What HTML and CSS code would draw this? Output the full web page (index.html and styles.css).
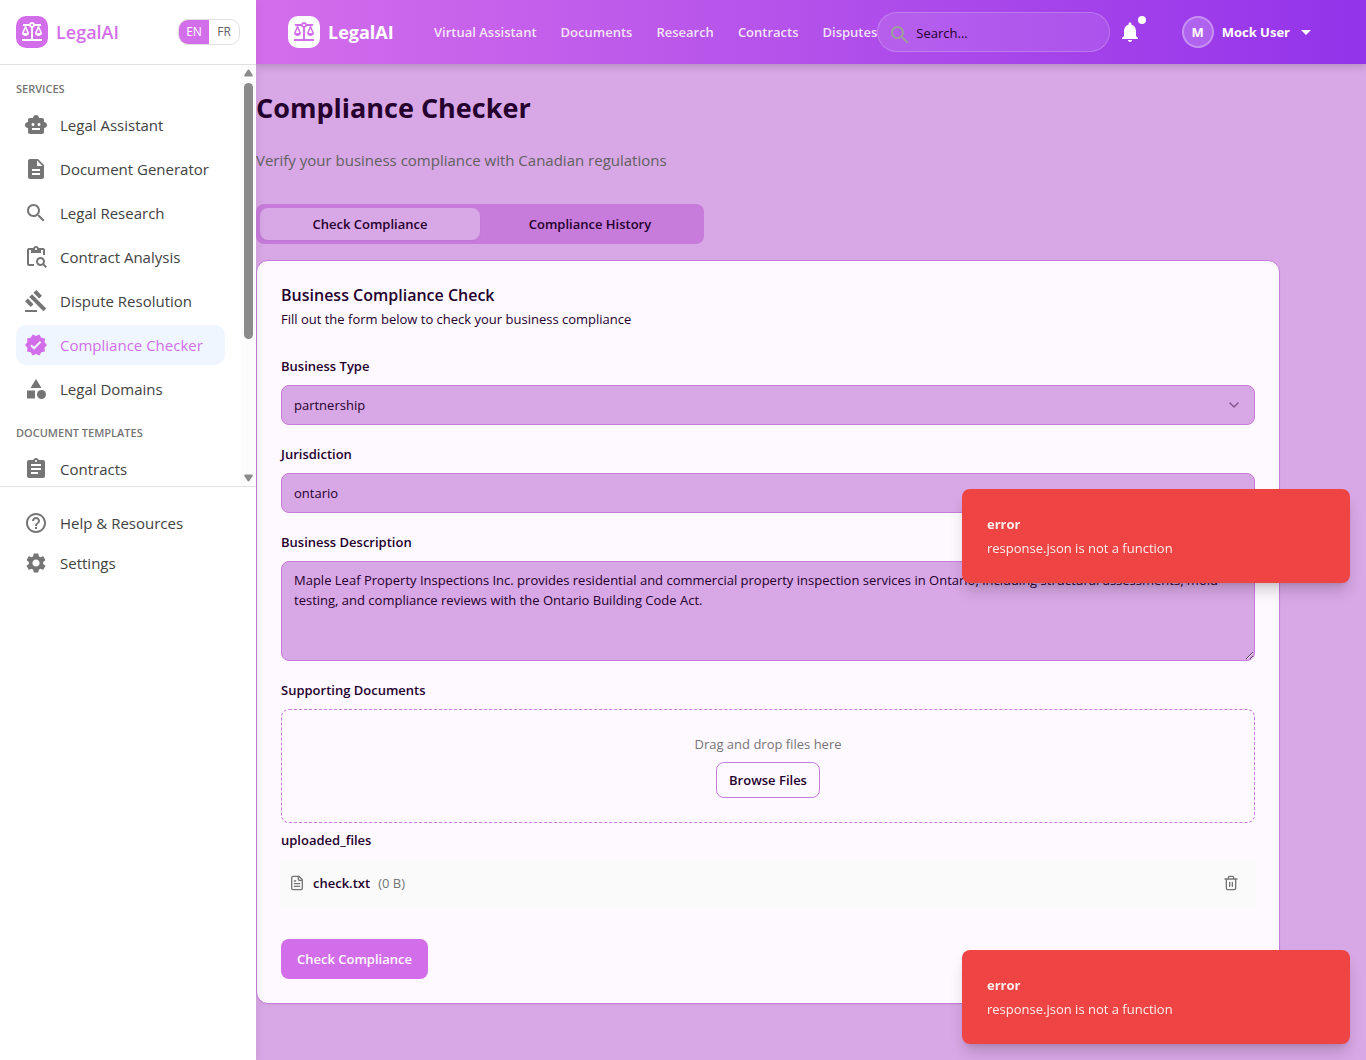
FILE: index.html
```html
<!DOCTYPE html>
<html lang="en">
<head>
<meta charset="utf-8">
<meta name="viewport" content="width=device-width, initial-scale=1">
<title>Compliance Checker - LegalAI</title>
<link rel="stylesheet" href="styles.css">
</head>
<body>
<svg class="sprite" aria-hidden="true">
  <symbol id="balance" viewBox="0 0 24 24"><path d="M13 7.83c.85-.3 1.53-.98 1.83-1.83H18l-3 7c0 1.66 1.57 3 3.5 3s3.5-1.34 3.5-3l-3-7h2V4h-6.17c-.41-1.17-1.52-2-2.83-2s-2.42.83-2.83 2H3v2h2l-3 7c0 1.66 1.57 3 3.5 3S9 14.66 9 13L6 6h3.17c.3.85.98 1.53 1.83 1.83V19H2v2h20v-2h-9zM20.37 13h-3.74l1.87-4.36zm-13 0H3.63L5.5 8.64zM12 6c-.55 0-1-.45-1-1s.45-1 1-1 1 .45 1 1-.45 1-1 1"/></symbol>
  <symbol id="search" viewBox="0 0 24 24"><path d="M15.5 14h-.79l-.28-.27C15.41 12.59 16 11.11 16 9.5 16 5.91 13.09 3 9.5 3S3 5.91 3 9.5 5.91 16 9.5 16c1.61 0 3.09-.59 4.23-1.57l.27.28v.79l5 4.99L20.49 19zm-6 0C7.01 14 5 11.99 5 9.5S7.01 5 9.5 5 14 7.01 14 9.5 11.99 14 9.5 14"/></symbol>
  <symbol id="chevron" viewBox="0 0 24 24"><path d="m6 9 6 6 6-6" fill="none" stroke="currentColor" stroke-width="2" stroke-linecap="round" stroke-linejoin="round"/></symbol>
</svg>
<div class="app">
  <aside class="sidebar">
    <div class="sidebar-head">
      <a class="brand brand-side" href="#"><span class="brand-mark"><svg class="icon"><use href="#balance"/></svg></span>LegalAI</a>
      <div class="lang">
        <button class="lang-btn is-on" type="button">EN</button>
        <button class="lang-btn" type="button">FR</button>
      </div>
    </div>
    <div class="menu-wrap">
      <nav class="menu" aria-label="Services">
        <h2 class="menu-title">SERVICES</h2>
        <ul class="menu-list">
          <li><a class="menu-item" href="#"><svg class="icon" viewBox="0 0 24 24"><path d="M20 9V7c0-1.1-.9-2-2-2h-3c0-1.66-1.34-3-3-3S9 3.34 9 5H6c-1.1 0-2 .9-2 2v2c-1.66 0-3 1.34-3 3s1.34 3 3 3v4c0 1.1.9 2 2 2h12c1.1 0 2-.9 2-2v-4c1.66 0 3-1.34 3-3s-1.34-3-3-3M7.5 11.5c0-.83.67-1.5 1.5-1.5s1.5.67 1.5 1.5S9.83 13 9 13s-1.5-.67-1.5-1.5M16 17H8v-2h8zm-1-4c-.83 0-1.5-.67-1.5-1.5S14.17 10 15 10s1.5.67 1.5 1.5S15.83 13 15 13"/></svg>Legal Assistant</a></li>
          <li><a class="menu-item" href="#"><svg class="icon" viewBox="0 0 24 24"><path d="M14 2H6c-1.1 0-1.99.9-1.99 2L4 20c0 1.1.89 2 1.99 2H18c1.1 0 2-.9 2-2V8zm2 16H8v-2h8zm0-4H8v-2h8zm-3-5V3.5L18.5 9z"/></svg>Document Generator</a></li>
          <li><a class="menu-item" href="#"><svg class="icon"><use href="#search"/></svg>Legal Research</a></li>
          <li><a class="menu-item" href="#"><svg class="icon" viewBox="0 0 24 24"><path d="M5 5h2v3h10V5h2v5h2V5c0-1.1-.9-2-2-2h-4.18C14.4 1.84 13.3 1 12 1s-2.4.84-2.82 2H5c-1.1 0-2 .9-2 2v14c0 1.1.9 2 2 2h5v-2H5zm7-2c.55 0 1 .45 1 1s-.45 1-1 1-1-.45-1-1 .45-1 1-1"/><path d="M20.3 18.9c.4-.7.7-1.5.7-2.4 0-2.5-2-4.5-4.5-4.5S12 14 12 16.5s2 4.5 4.5 4.5c.9 0 1.7-.3 2.4-.7l2.7 2.7 1.4-1.4zm-3.8.1c-1.4 0-2.5-1.1-2.5-2.5s1.1-2.5 2.5-2.5 2.5 1.1 2.5 2.5-1.1 2.5-2.5 2.5"/></svg>Contract Analysis</a></li>
          <li><a class="menu-item" href="#"><svg class="icon" viewBox="0 0 24 24"><path d="m5.25 8.07 2.83-2.83 14.14 14.15-2.83 2.83zm4.24-4.24L12.31 1l5.66 5.66-2.83 2.82zM1 12.31l2.83-2.82 5.65 5.65-2.83 2.83zM1 21h12v2H1z"/></svg>Dispute Resolution</a></li>
          <li><a class="menu-item is-active" href="#" aria-current="page"><svg class="icon" viewBox="0 0 24 24"><path d="m23 12-2.44-2.79.34-3.69-3.61-.82-1.89-3.2L12 2.96 8.6 1.5 6.71 4.69 3.1 5.5l.34 3.7L1 12l2.44 2.79-.34 3.7 3.61.82L8.6 22.5l3.4-1.47 3.4 1.46 1.89-3.19 3.61-.82-.34-3.69zm-12.91 4.72-3.8-3.81 1.48-1.48 2.32 2.33 5.85-5.87 1.48 1.48z"/></svg>Compliance Checker</a></li>
          <li><a class="menu-item" href="#"><svg class="icon" viewBox="0 0 24 24"><path d="m12 2-5.5 9h11z"/><circle cx="17.5" cy="17.5" r="4.5"/><path d="M3 13.5h8v8H3z"/></svg>Legal Domains</a></li>
        </ul>
        <h2 class="menu-title">DOCUMENT TEMPLATES</h2>
        <ul class="menu-list">
          <li><a class="menu-item" href="#"><svg class="icon" viewBox="0 0 24 24"><path d="M19 3h-4.18C14.4 1.84 13.3 1 12 1s-2.4.84-2.82 2H5c-1.1 0-2 .9-2 2v14c0 1.1.9 2 2 2h14c1.1 0 2-.9 2-2V5c0-1.1-.9-2-2-2m-7 0c.55 0 1 .45 1 1s-.45 1-1 1-1-.45-1-1 .45-1 1-1m2 14H7v-2h7zm3-4H7v-2h10zm0-4H7V7h10z"/></svg>Contracts</a></li>
        </ul>
      </nav>
      <div class="scrollbar" aria-hidden="true">
        <svg class="scroll-arrow" viewBox="0 0 9 8"><path d="M4.500 0.500 Q5 0.500 5.500 1.200 L8.700 6 Q9 7.500 8 7.500 H1 Q0 7.500 0.300 6 L3.500 1.200 Q4 0.500 4.500 0.500z"/></svg>
        <span class="scroll-thumb"></span>
        <svg class="scroll-arrow" viewBox="0 0 9 8"><path d="M4.500 7.500 Q5 7.500 5.500 6.800 L8.700 2 Q9 0.500 8 0.500 H1 Q0 0.500 0.300 2 L3.500 6.800 Q4 7.500 4.500 7.500z"/></svg>
      </div>
    </div>
    <nav class="side-foot" aria-label="Support">
      <a class="menu-item" href="#"><svg class="icon" viewBox="0 0 24 24"><path d="M11 18h2v-2h-2zm1-16C6.480 2 2 6.480 2 12s4.480 10 10 10 10-4.480 10-10S17.520 2 12 2m0 18c-4.410 0-8-3.590-8-8s3.590-8 8-8 8 3.590 8 8-3.590 8-8 8m0-14c-2.210 0-4 1.790-4 4h2c0-1.100.9-2 2-2s2 .9 2 2c0 2-3 1.750-3 5h2c0-2.250 3-2.500 3-5 0-2.210-1.790-4-4-4"/></svg>Help &amp; Resources</a>
      <a class="menu-item" href="#"><svg class="icon" viewBox="0 0 24 24"><path d="M19.14 12.94c.04-.3.06-.61.06-.94 0-.32-.02-.64-.07-.94l2.03-1.58c.18-.14.23-.41.12-.61l-1.92-3.32c-.12-.22-.37-.29-.59-.22l-2.39.96c-.5-.38-1.03-.7-1.62-.94l-.36-2.54c-.04-.24-.24-.41-.48-.41h-3.840c-.24 0-.43.17-.47.41l-.36 2.540c-.59.24-1.130.57-1.620.94l-2.390-.96c-.22-.08-.47 0-.59.22L2.740 8.870c-.12.21-.08.47.12.61l2.030 1.580c-.05.3-.09.63-.09.94s.02.64.07.94l-2.030 1.580c-.18.14-.23.41-.12.61l1.920 3.320c.12.22.37.29.59.22l2.390-.96c.5.38 1.030.7 1.620.94l.36 2.540c.05.24.24.41.48.41h3.840c.24 0 .44-.17.47-.41l.36-2.540c.59-.24 1.130-.56 1.620-.94l2.390.96c.22.08.47 0 .59-.22l1.920-3.320c.12-.22.07-.47-.12-.61zM12 15.600c-1.980 0-3.600-1.620-3.600-3.600s1.620-3.600 3.600-3.600 3.600 1.620 3.600 3.600-1.620 3.600-3.600 3.600"/></svg>Settings</a>
    </nav>
  </aside>

  <div class="page">
    <header class="topbar">
      <a class="brand brand-top" href="#"><span class="brand-mark"><svg class="icon"><use href="#balance"/></svg></span>LegalAI</a>
      <nav class="topnav" aria-label="Main">
        <a href="#">Virtual Assistant</a>
        <a href="#">Documents</a>
        <a href="#">Research</a>
        <a href="#">Contracts</a>
        <a href="#">Disputes</a>
      </nav>
      <label class="search">
        <svg class="icon"><use href="#search"/></svg>
        <input type="search" placeholder="Search..." aria-label="Search">
      </label>
      <button class="bell" type="button" aria-label="Notifications"><svg class="icon" viewBox="0 0 24 24"><path d="M12 22c1.100 0 2-.9 2-2h-4c0 1.100.9 2 2 2m6-6v-5c0-3.070-1.630-5.640-4.500-6.320V4c0-.83-.67-1.500-1.500-1.500s-1.500.67-1.500 1.500v.68C7.640 5.360 6 7.920 6 11v5l-2 2v1h16v-1z"/></svg><span class="bell-dot"></span></button>
      <button class="user" type="button"><span class="avatar">M</span>Mock User<svg class="icon" viewBox="0 0 24 24"><path d="m7 10 5 5 5-5z"/></svg></button>
    </header>

    <main class="content">
      <h1 class="title">Compliance Checker</h1>
      <p class="subtitle">Verify your business compliance with Canadian regulations</p>
      <div class="tabs" role="tablist">
        <button class="tab is-on" type="button" role="tab" aria-selected="true">Check Compliance</button>
        <button class="tab" type="button" role="tab" aria-selected="false">Compliance History</button>
      </div>
      <section class="card">
        <h2 class="card-title">Business Compliance Check</h2>
        <p class="card-desc">Fill out the form below to check your business compliance</p>
        <form class="form">
          <div class="field">
            <label class="label" for="type">Business Type</label>
            <div class="select">
              <select class="control" id="type"><option>partnership</option></select>
              <svg class="select-arrow"><use href="#chevron"/></svg>
            </div>
          </div>
          <div class="field">
            <label class="label" for="jurisdiction">Jurisdiction</label>
            <div class="select">
              <select class="control" id="jurisdiction"><option>ontario</option></select>
              <svg class="select-arrow"><use href="#chevron"/></svg>
            </div>
          </div>
          <div class="field">
            <label class="label" for="description">Business Description</label>
            <textarea class="control area" id="description">Maple Leaf Property Inspections Inc. provides residential and commercial property inspection services in Ontario, including structural assessments, mold testing, and compliance reviews with the Ontario Building Code Act.</textarea>
          </div>
          <div class="field">
            <span class="label">Supporting Documents</span>
            <div class="dropzone">
              <p>Drag and drop files here</p>
              <button class="browse" type="button">Browse Files</button>
            </div>
            <span class="label">uploaded_files</span>
            <div class="file">
              <svg class="file-icon" viewBox="0 0 24 24"><path d="M15 2H6a2 2 0 0 0-2 2v16a2 2 0 0 0 2 2h12a2 2 0 0 0 2-2V7z"/><path d="M14 2v4a2 2 0 0 0 2 2h4M10 9H8M16 13H8M16 17H8"/></svg>
              <span class="file-name">check.txt</span>
              <span class="file-size">(0 B)</span>
              <button class="remove" type="button" aria-label="Remove file"><svg class="file-icon" viewBox="0 0 24 24"><path d="M3 6h18M19 6v14c0 1-1 2-2 2H7c-1 0-2-1-2-2V6M8 6V4c0-1 1-2 2-2h4c1 0 2 1 2 2v2M10 11v6M14 11v6"/></svg></button>
            </div>
          </div>
          <button class="submit" type="button">Check Compliance</button>
        </form>
      </section>
    </main>
  </div>
</div>

<div class="toasts">
  <div class="toast" role="alert"><strong>error</strong><p>response.json is not a function</p></div>
  <div class="toast" role="alert"><strong>error</strong><p>response.json is not a function</p></div>
</div>
</body>
</html>
```
FILE: styles.css
```css
:root {
  --primary: #d36eeb;
  --surface: #d8a7e5;
  --edge: #c77bdb;
  --ink: #25002e;
  --paper: #fef9ff;
  --muted: #757575;
}

* { box-sizing: border-box; }

body {
  margin: 0;
  background: var(--surface);
  color: var(--ink);
  font: 13px/20px "Open Sans", "Noto Sans", sans-serif;
}

h1, h2, p, ul { margin: 0; padding: 0; }
ul { list-style: none; }
a { color: inherit; text-decoration: none; }
button { padding: 0; border: 0; background: none; color: inherit; font: inherit; }
svg { display: block; flex: none; }

.sprite { position: absolute; width: 0; height: 0; }
.icon { width: 24px; height: 24px; fill: currentColor; }

.app { display: flex; min-height: 100vh; }

/* Sidebar */
.sidebar {
  z-index: 2;
  flex: none;
  width: 256px;
  background: #fff;
  box-shadow: 2px 0 8px rgba(0, 0, 0, 0.06);
}
.sidebar-head {
  display: flex;
  align-items: center;
  justify-content: space-between;
  height: 65px;
  padding: 0 16px;
  border-bottom: 1px solid #e0e0e0;
}
.brand {
  display: flex;
  align-items: center;
  gap: 8px;
  font-size: 18px;
  font-weight: 600;
}
.brand-side { color: var(--primary); }
.brand-mark {
  display: grid;
  place-items: center;
  width: 32px;
  height: 32px;
  border-radius: 10px;
}
.brand-side .brand-mark { background: var(--primary); color: #fff; }
.lang {
  display: flex;
  overflow: hidden;
  border: 1px solid #e0e0e0;
  border-radius: 10px;
}
.lang-btn {
  width: 30px;
  height: 24px;
  color: #616161;
  font-size: 12px;
}
.lang-btn.is-on { background: var(--primary); color: #fff; }

.menu-wrap { display: flex; height: 421px; }
.menu {
  flex: 1;
  padding: 16px;
  overflow-y: auto;
  scrollbar-width: none;
}
.menu-title {
  margin-bottom: 8px;
  color: var(--muted);
  font-size: 11px;
  font-weight: 600;
  line-height: 16px;
}
.menu-list { display: grid; gap: 4px; margin-bottom: 16px; }
.menu-item {
  display: flex;
  align-items: center;
  gap: 12px;
  height: 40px;
  padding: 0 8px;
  border-radius: 10px;
  color: #424242;
  font-size: 15px;
}
.menu-item .icon { color: var(--muted); }
.menu-item.is-active { background: #eff6ff; }
.menu-item.is-active, .menu-item.is-active .icon { color: var(--primary); }

.scrollbar {
  display: flex;
  flex-direction: column;
  align-items: center;
  width: 15px;
  padding: 4px 0;
  background: #fcfcfc;
}
.scroll-arrow { width: 9px; height: 8px; fill: #8b8b8b; }
.scroll-thumb {
  width: 9px;
  height: 256px;
  margin: 6px 0 auto;
  border-radius: 5px;
  background: #8b8b8b;
}
.side-foot { padding: 16px; border-top: 1px solid #e0e0e0; }

/* Top bar */
.page { flex: 1; min-width: 0; }
.topbar {
  display: flex;
  align-items: center;
  height: 64px;
  padding: 0 48px 0 32px;
  background: linear-gradient(to right, #d36eeb, #9333ea);
  box-shadow: 0 2px 8px rgba(0, 0, 0, 0.18);
  color: #fff;
}
.brand-top { flex: none; width: 146px; font-weight: 700; }
.brand-top .brand-mark { background: #fff; color: var(--primary); }
.topnav {
  display: flex;
  flex: none;
  gap: 24px;
  color: rgba(255, 255, 255, 0.85);
  font-weight: 600;
}
.search {
  display: flex;
  flex: 1;
  align-items: center;
  gap: 4px;
  min-width: 0;
  height: 40px;
  padding: 0 10px;
  border: 1px solid rgba(255, 255, 255, 0.2);
  border-radius: 20px;
  background: rgba(255, 255, 255, 0.1);
}
.search .icon { margin-top: 6px; color: #9e9e9e; }
.search input {
  flex: 1;
  min-width: 0;
  padding: 2px 0 0;
  border: 0;
  outline: 0;
  background: none;
  color: var(--ink);
  font: inherit;
}
.search input::placeholder { color: var(--ink); opacity: 1; }
.bell { position: relative; margin: 0 40px 0 8px; }
.bell-dot {
  position: absolute;
  top: -4px;
  right: -4px;
  width: 8px;
  height: 8px;
  border-radius: 50%;
  background: #fff;
}
.user {
  display: flex;
  flex: none;
  align-items: center;
  font-weight: 700;
}
.user .icon { margin-left: 4px; }
.avatar {
  width: 32px;
  height: 32px;
  margin-right: 8px;
  border: 2px solid rgba(255, 255, 255, 0.3);
  border-radius: 50%;
  background: rgba(255, 255, 255, 0.2);
  line-height: 28px;
}

/* Content */
.content { max-width: 1024px; padding: 24px 0; }
.title { font-size: 27px; font-weight: 700; line-height: 40px; }
.subtitle {
  margin: 20px 0 32px;
  color: #616161;
  font-size: 15px;
  line-height: 24px;
}
.tabs {
  display: grid;
  grid-template-columns: 1fr 1fr;
  max-width: 448px;
  margin-bottom: 16px;
  padding: 4px;
  border-radius: 8px;
  background: var(--edge);
}
.tab { height: 32px; border-radius: 8px; font-weight: 600; }
.tab.is-on { background: var(--surface); box-shadow: 0 1px 2px rgba(0, 0, 0, 0.05); }

.card {
  padding: 24px;
  border: 1px solid var(--edge);
  border-radius: 12px;
  background: var(--paper);
  box-shadow: 0 1px 2px rgba(0, 0, 0, 0.05);
}
.card-title {
  margin-bottom: 4px;
  font-size: 16px;
  font-weight: 600;
  line-height: 20px;
}
.form { display: grid; gap: 20px; margin-top: 28px; }
.field { display: grid; gap: 8px; }
.label { padding-bottom: 2px; font-weight: 600; line-height: 18px; }
.select { position: relative; }
.control {
  display: block;
  width: 100%;
  height: 40px;
  padding: 0 12px;
  border: 1px solid var(--edge);
  border-radius: 8px;
  appearance: none;
  background: var(--surface);
  color: var(--ink);
  font: inherit;
}
.area { height: 100px; padding: 8px 12px; resize: vertical; }
.select-arrow {
  position: absolute;
  top: 12px;
  right: 13px;
  width: 16px;
  height: 16px;
  opacity: 0.5;
  pointer-events: none;
}
.dropzone {
  display: grid;
  gap: 8px;
  justify-items: center;
  padding: 24px;
  border: 1px dashed var(--edge);
  border-radius: 8px;
  color: var(--muted);
}
.browse {
  height: 36px;
  padding: 0 12px;
  border: 1px solid var(--edge);
  border-radius: 8px;
  color: var(--ink);
  font-weight: 600;
}
.file {
  display: flex;
  align-items: center;
  gap: 8px;
  padding: 8px;
  border-radius: 4px;
  background: #fafafa;
}
.file-icon {
  width: 16px;
  height: 16px;
  fill: none;
  stroke: #757575;
  stroke-width: 2;
  stroke-linecap: round;
  stroke-linejoin: round;
}
.file-name { font-weight: 600; }
.file-size { color: var(--muted); }
.remove { margin-left: auto; padding: 8px; }
.submit {
  justify-self: start;
  height: 40px;
  margin-top: 12px;
  padding: 0 16px;
  border-radius: 8px;
  background: var(--primary);
  color: #fef9ff;
  font-weight: 600;
}

/* Toasts */
.toasts {
  position: fixed;
  top: 489px;
  right: 16px;
  bottom: 16px;
  z-index: 3;
  display: flex;
  flex-direction: column;
  justify-content: space-between;
  width: 388px;
}
.toast {
  display: grid;
  gap: 4px;
  padding: 25px;
  border-radius: 8px;
  background: #ef4444;
  box-shadow: 0 10px 15px -3px rgba(0, 0, 0, 0.18), 0 4px 6px -4px rgba(0, 0, 0, 0.15);
  color: rgba(255, 255, 255, 0.9);
}
.toast strong { font-weight: 700; }
```
